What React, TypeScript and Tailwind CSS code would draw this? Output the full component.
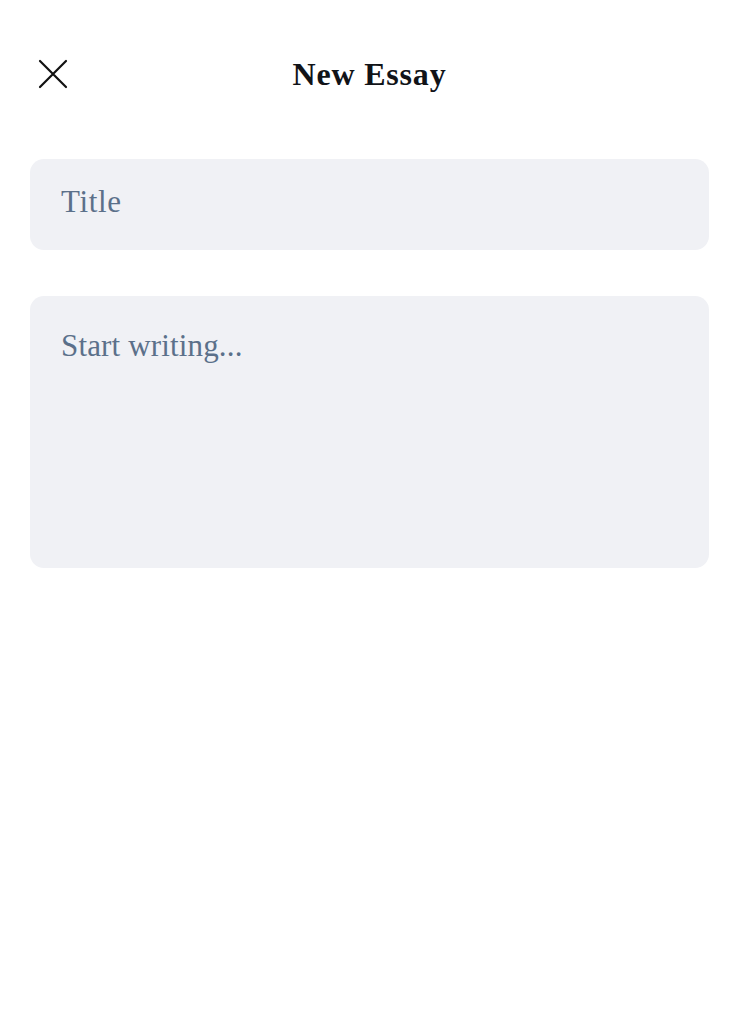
import React, { useState } from 'react';

export default function App() {
  const [title, setTitle] = useState('');
  const [body, setBody] = useState('');

  return (
    <div className="min-h-[1035px] w-full bg-white font-['Liberation_Serif',serif]">
      {/* header */}
      <div className="relative flex h-[60px] items-center justify-center mt-[44px] px-[30px]">
        <button className="absolute left-[36px] top-[13px] flex h-[34px] w-[34px] items-center justify-center" aria-label="Close">
          <svg width="32" height="32" viewBox="0 0 32 32" fill="none" stroke="#111" strokeWidth="2.2" strokeLinecap="round">
            <path d="M3 3 L29 29 M29 3 L3 29" />
          </svg>
        </button>
        <h1 className="text-[32px] font-bold tracking-[0.025em] text-[#111318]">New Essay</h1>
      </div>

      <div className="mt-[55px] flex flex-col gap-[46px] px-[30px]">
        <input
          value={title}
          onChange={(e) => setTitle(e.target.value)}
          placeholder="Title"
          className="h-[91px] w-full rounded-[14px] bg-[#f0f1f5] px-[31px] pb-[6px] text-[31px] tracking-[0.02em] text-[#1f2937] outline-none placeholder:text-[#5b708a]"
        />
        <textarea
          value={body}
          onChange={(e) => setBody(e.target.value)}
          placeholder="Start writing..."
          className="h-[272px] w-full resize-none rounded-[14px] bg-[#f0f1f5] px-[31px] pt-[32px] text-[31px] leading-[36px] tracking-[0.005em] text-[#1f2937] outline-none placeholder:text-[#5b708a]"
        />
      </div>
    </div>
  );
}
